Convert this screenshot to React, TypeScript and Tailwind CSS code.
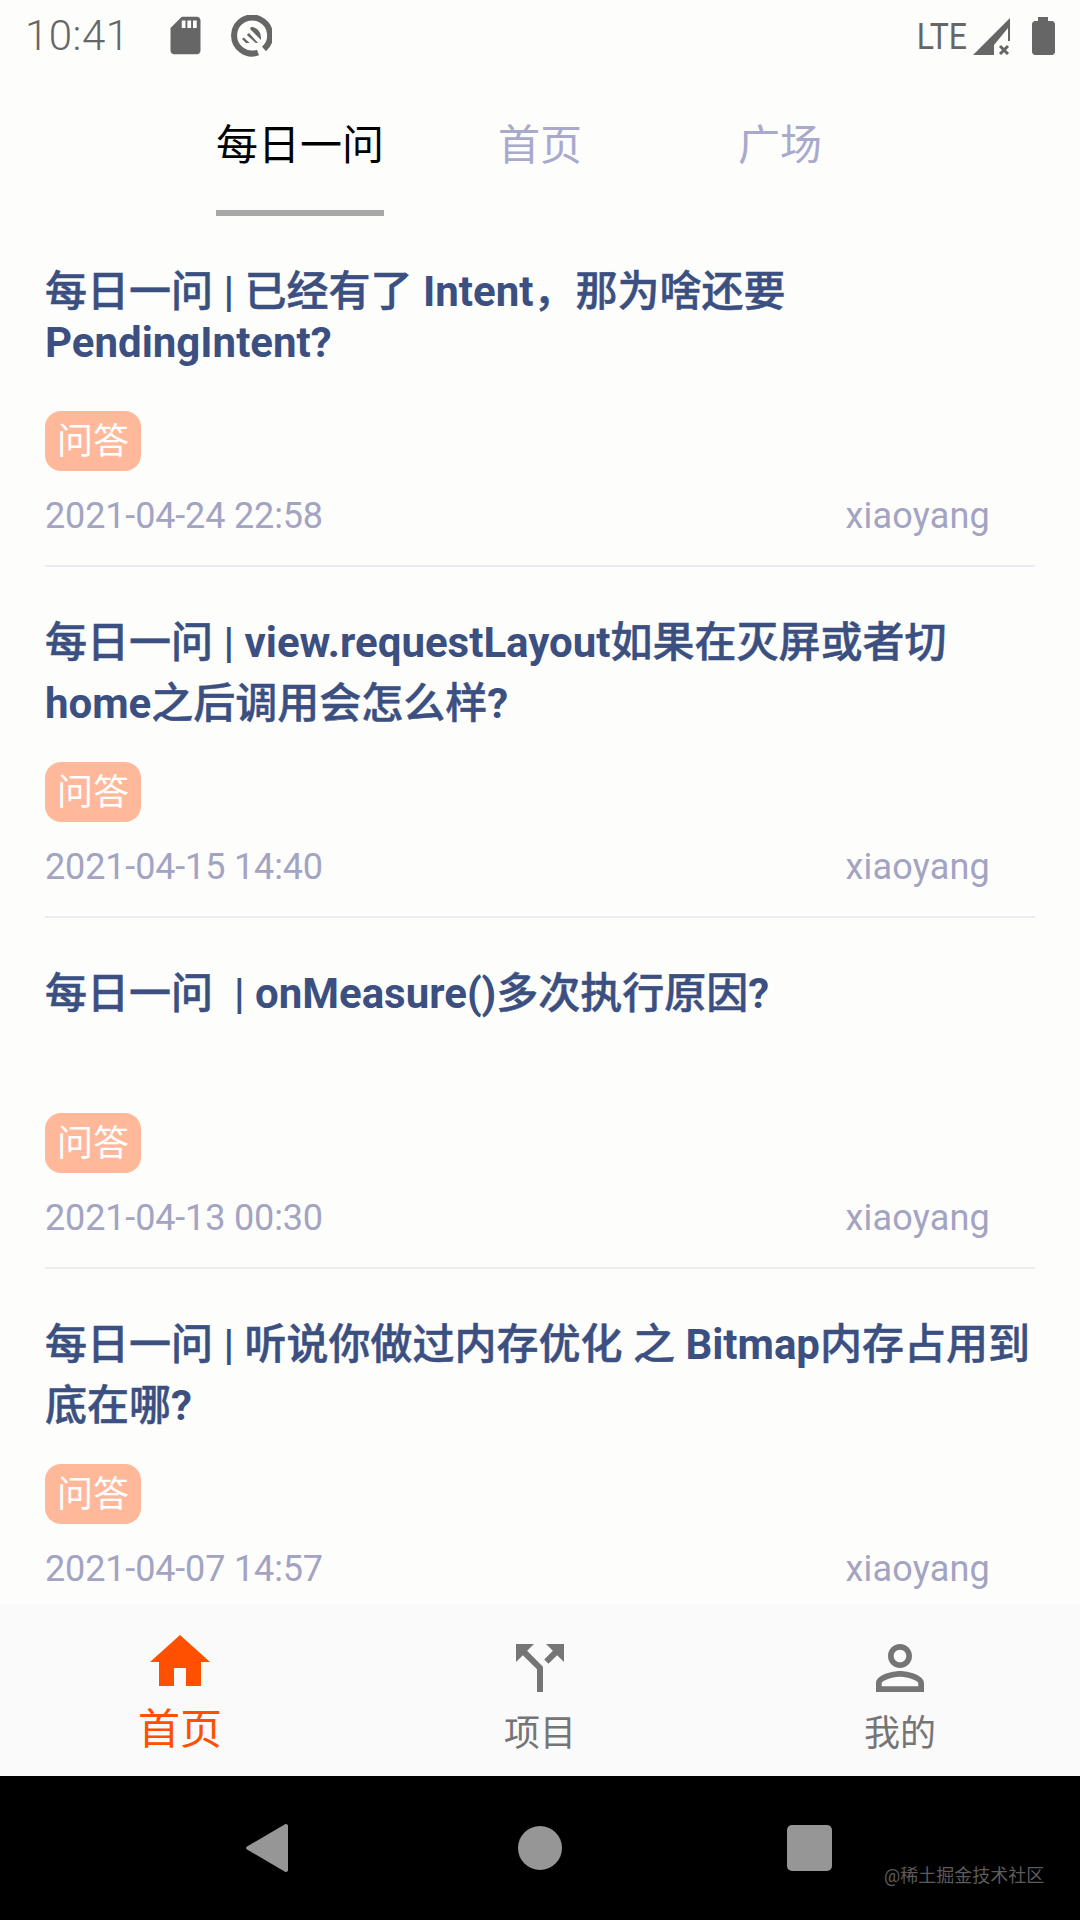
const FONT = 'font-["Roboto","Noto_Sans_CJK_SC",sans-serif]'

const POSTS = [
  { lines: ['每日一问 | 已经有了 Intent，那为啥还要', 'PendingIntent?'], date: '2021-04-24 22:58' },
  { lines: ['每日一问 | view.requestLayout如果在灭屏或者切', 'home之后调用会怎么样?'], date: '2021-04-15 14:40' },
  { lines: ['每日一问  | onMeasure()多次执行原因?'], date: '2021-04-13 00:30' },
  { lines: ['每日一问 | 听说你做过内存优化 之 Bitmap内存占用到', '底在哪?'], date: '2021-04-07 14:57' },
]

function StatusBar() {
  return (
    <div className="h-[72px] shrink-0 flex items-center pl-[25px] pr-[25px] text-[#666666]">
      <span className="text-[42px] leading-none font-light tracking-[0.5px]">10:41</span>
      <svg className="ml-[33px] -mt-[2px] w-[45px] h-[45px]" viewBox="0 0 24 24" fill="#666666">
        <path d="M18 2h-8L4.02 8 4 20c0 1.1.9 2 2 2h12c1.1 0 2-.9 2-2V4c0-1.1-.9-2-2-2zm-6 6h-2V4h2v4zm3 0h-2V4h2v4zm3 0h-2V4h2v4z" />
      </svg>
      <svg className="ml-[22px] -mt-[1px] w-[42px] h-[42px]" viewBox="0 0 42 42" fill="none">
        <path d="M34 34A18 18 0 1 0 28 37.5" stroke="#666666" strokeWidth="6" />
        <path d="M21 12A10 10 0 0 1 31 22L31 25L20 14Z" fill="#666666" />
        <path d="M12 24L19 18L28 28L16 28Z" fill="#666666" />
        <path d="M15 21L36 40" stroke="#fdfdfc" strokeWidth="4" />
      </svg>
      <div className="ml-auto flex items-center">
        <span className="text-[32px] leading-none scale-y-[1.15]">LTE</span>
        <svg className="ml-[6px] w-[38px] h-[37px]" viewBox="0 0 38 37" fill="#666666">
          <path d="M0 37L37 0V23H35V10L21 27V37Z" />
          <path d="M27 28L35 36M35 28L27 36" stroke="#666666" strokeWidth="3" />
        </svg>
        <svg className="ml-[21px] w-[23px] h-[38px]" viewBox="0 0 23 38" fill="#666666">
          <path d="M6 0H16V4H20C21.5 4 23 5.5 23 7V35C23 36.5 21.5 38 20 38H3C1.5 38 0 36.5 0 35V7C0 5.5 1.5 4 3 4H6Z" />
        </svg>
      </div>
    </div>
  )
}

function Tabs() {
  const tabs = ['每日一问', '首页', '广场']
  return (
    <div className="h-[144px] shrink-0 flex justify-center">
      {tabs.map((t, i) => (
        <div key={t} className="w-[240px] flex flex-col items-center">
          <div className={`h-[138px] pt-[10px] flex items-center text-[42px] leading-none ${i === 0 ? 'text-black' : 'text-[#a9a9cc]'}`}>
            {t}
          </div>
          {i === 0 && <div className="w-[168px] h-[6px] bg-[#a8a8a8]" />}
        </div>
      ))}
    </div>
  )
}

function PostRow({ lines, date }: { lines: string[]; date: string }) {
  return (
    <div className="shrink-0 mx-[45px] w-[990px] pt-[41px] h-[351px] border-b-2 border-[#ebebf2]">
      <div className="h-[122px] text-[42px] leading-[normal] font-medium text-[#3b5081] whitespace-pre [-webkit-text-stroke:0.5px]">
        {lines.map(line => (
          <div key={line}>
            {/* latin runs are bold, the CJK runs only medium */}
            {line.split(/([\x21-\x7e]+)/).map((r, i) =>
              i % 2 === 1 ? <span key={i} className="font-bold [-webkit-text-stroke:0px]">{r}</span> : r
            )}
          </div>
        ))}
      </div>
      <div className="mt-[32px] w-[96px] h-[60px] pt-[2px] rounded-[16px] bg-[#ffb899] flex items-center justify-center text-[36px] leading-none text-white">
        问答
      </div>
      <div className="mt-[24px] pr-[45px] flex justify-between text-[36px] leading-[42px] text-[#a3a3c2]">
        <span className="tracking-[-0.15px]">{date}</span>
        <span className="tracking-[0.2px]">xiaoyang</span>
      </div>
    </div>
  )
}

function BottomNav() {
  return (
    <div className="h-[172px] shrink-0 bg-[#fafafa] grid grid-cols-3">
      <div className="flex flex-col items-center pt-[22px] text-[#ff5000]">
        <svg className="w-[72px] h-[72px]" viewBox="0 0 24 24" fill="currentColor">
          <path d="M10 20v-6h4v6h5v-8h3L12 3 2 12h3v8z" />
        </svg>
        <span className="mt-[10px] text-[42px] leading-[44px]">首页</span>
      </div>
      <div className="flex flex-col items-center pt-[28px] text-[#757575]">
        <svg className="w-[72px] h-[72px]" viewBox="0 0 24 24" fill="currentColor">
          <path d="M14 4l2.29 2.29-2.88 2.88 1.42 1.42 2.88-2.88L20 10V4zm-4 0H4v6l2.29-2.29 4.71 4.7V20h2v-8.41l-5.29-5.3z" />
        </svg>
        <span className="mt-[8px] text-[36px] leading-[44px]">项目</span>
      </div>
      <div className="flex flex-col items-center pt-[28px] text-[#757575]">
        <svg className="w-[72px] h-[72px]" viewBox="0 0 24 24" fill="currentColor">
          <path d="M12 5.9c1.16 0 2.1.94 2.1 2.1s-.94 2.1-2.1 2.1S9.9 9.16 9.9 8s.94-2.1 2.1-2.1m0 9c2.97 0 6.1 1.46 6.1 2.1v1.1H5.9V17c0-.64 3.13-2.1 6.1-2.1M12 4C9.79 4 8 5.79 8 8s1.79 4 4 4 4-1.79 4-4-1.79-4-4-4zm0 9c-2.67 0-8 1.34-8 4v3h16v-3c0-2.66-5.33-4-8-4z" />
        </svg>
        <span className="mt-[8px] text-[36px] leading-[44px]">我的</span>
      </div>
    </div>
  )
}

function SystemBar() {
  return (
    <div className="relative h-[144px] shrink-0 bg-black flex items-center">
      <div className="w-[360px] flex justify-center pl-[174px]">
        <svg className="w-[42px] h-[48px]" viewBox="0 0 42 48" fill="#969696">
          <path d="M39 0.3C40.5 -0.5 42 0.5 42 2V46C42 47.5 40.5 48.5 39 47.7L1 25.5C-0.3 24.8 -0.3 23.2 1 22.5Z" />
        </svg>
      </div>
      <div className="w-[360px] flex justify-center">
        <div className="w-[44px] h-[44px] rounded-full bg-[#969696]" />
      </div>
      <div className="w-[360px] flex pl-[67px]">
        <div className="w-[45px] h-[46px] rounded-[5px] bg-[#969696]" />
      </div>
      <span className="absolute left-[884px] top-[87px] text-[18px] leading-[26px] text-[#5c5c5c]">@稀土掘金技术社区</span>
    </div>
  )
}

export default function App() {
  return (
    <div className={`w-[1080px] h-[1920px] flex flex-col overflow-hidden bg-[#fdfdfc] ${FONT}`}>
      <StatusBar />
      <Tabs />
      <div className="flex-1 min-h-0 overflow-hidden">
        {POSTS.map(p => (
          <PostRow key={p.date} lines={p.lines} date={p.date} />
        ))}
      </div>
      <BottomNav />
      <SystemBar />
    </div>
  )
}
